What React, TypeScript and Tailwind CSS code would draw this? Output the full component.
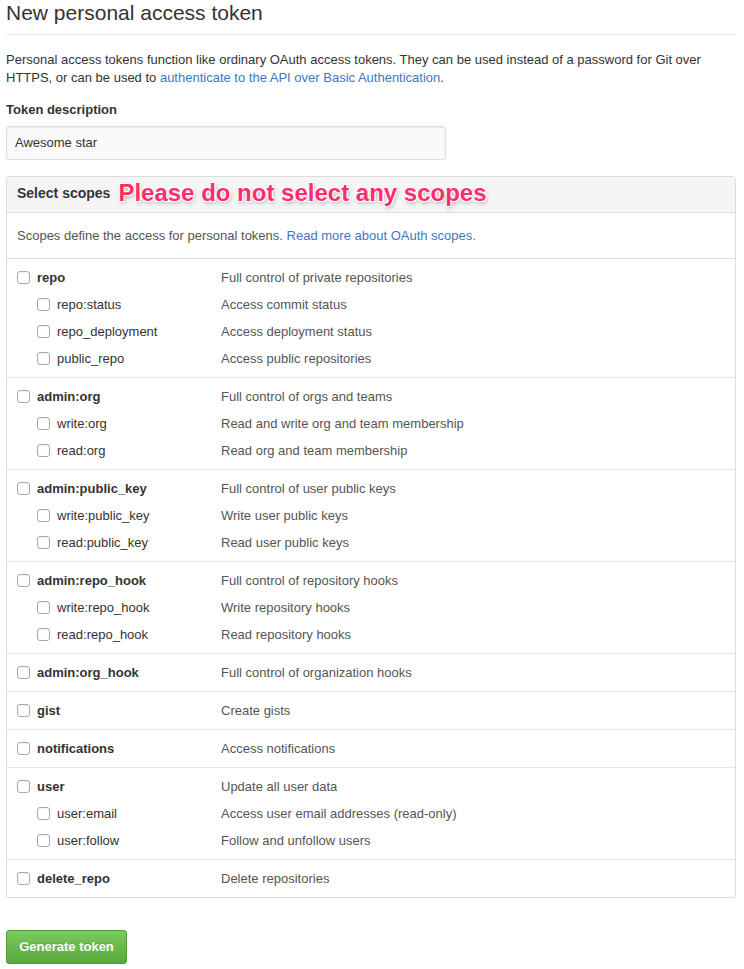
const groups: { name: string; desc: string; subs: [string, string][] }[] = [
  {
    name: 'repo',
    desc: 'Full control of private repositories',
    subs: [
      ['repo:status', 'Access commit status'],
      ['repo_deployment', 'Access deployment status'],
      ['public_repo', 'Access public repositories'],
    ],
  },
  {
    name: 'admin:org',
    desc: 'Full control of orgs and teams',
    subs: [
      ['write:org', 'Read and write org and team membership'],
      ['read:org', 'Read org and team membership'],
    ],
  },
  {
    name: 'admin:public_key',
    desc: 'Full control of user public keys',
    subs: [
      ['write:public_key', 'Write user public keys'],
      ['read:public_key', 'Read user public keys'],
    ],
  },
  {
    name: 'admin:repo_hook',
    desc: 'Full control of repository hooks',
    subs: [
      ['write:repo_hook', 'Write repository hooks'],
      ['read:repo_hook', 'Read repository hooks'],
    ],
  },
  { name: 'admin:org_hook', desc: 'Full control of organization hooks', subs: [] },
  { name: 'gist', desc: 'Create gists', subs: [] },
  { name: 'notifications', desc: 'Access notifications', subs: [] },
  {
    name: 'user',
    desc: 'Update all user data',
    subs: [
      ['user:email', 'Access user email addresses (read-only)'],
      ['user:follow', 'Follow and unfollow users'],
    ],
  },
  { name: 'delete_repo', desc: 'Delete repositories', subs: [] },
];

const Checkbox = () => (
  <span className="inline-block w-[13px] h-[13px] shrink-0 rounded-[3px] border border-[#a9a9a9] bg-white shadow-[inset_0_1px_1px_rgba(0,0,0,0.06)]" />
);

const ScopeRow = ({ name, desc, sub }: { name: string; desc: string; sub?: boolean }) => (
  <div className="flex items-center h-[27px] pl-[10px]">
    <div className={`flex items-center w-[204px] ${sub ? 'pl-[20px]' : ''}`}>
      <Checkbox />
      <span className={`ml-[7px] ${sub ? 'text-[#333]' : 'font-bold text-[#333]'}`}>{name}</span>
    </div>
    <span className="text-[#555]">{desc}</span>
  </div>
);

export default function App() {
  return (
    <div className="w-[744px] min-h-[969px] bg-white px-[6px] text-[13px] leading-[18px] text-[#333] font-['Liberation_Sans',Arial,sans-serif]">
      <h2 className="text-[21px] leading-[26px] font-normal text-[#333] pb-[8px] border-b border-[#e5e5e5] w-[730px]">
        New personal access token
      </h2>

      <p className="mt-[16px] w-[730px]">
        Personal access tokens function like ordinary OAuth access tokens. They can be used instead of a password for Git over
        HTTPS, or can be used to <a className="text-[#4078c0]">authenticate to the API over Basic Authentication</a>.
      </p>

      <label className="block mt-[14px] font-bold">Token description</label>
      <div className="mt-[7px] w-[440px] h-[34px] flex items-center px-[8px] bg-[#fafafa] border border-[#ddd] rounded-[3px] shadow-[inset_0_1px_2px_rgba(0,0,0,0.075)]">
        Awesome star
      </div>

      <div className="mt-[16px] w-[730px] border border-[#ddd] rounded-[3px]">
        <div className="h-[36px] flex items-center px-[10px] pb-[3px] bg-[#f5f5f5] border-b border-[#ddd]">
          <h3 className="text-[14px] font-bold text-[#333]">Select scopes</h3>
          <span className="ml-[8px] text-[24px] font-bold text-[#ff2d6d] leading-[28px] [text-shadow:-1px_-1px_0_#fff,1px_-1px_0_#fff,-1px_1px_0_#fff,1px_1px_0_#fff,1px_2px_4px_rgba(0,0,0,0.35)]">
            Please do not select any scopes
          </span>
        </div>
        <div className="h-[46px] flex items-center px-[10px] border-b border-[#ddd] text-[#555]">
          <span>
            Scopes define the access for personal tokens.{' '}
            <a className="text-[#4078c0]">Read more about OAuth scopes.</a>
          </span>
        </div>
        {groups.map((g, i) => (
          <div key={g.name} className={`py-[5px] ${i < groups.length - 1 ? 'border-b border-[#e5e5e5]' : ''}`}>
            <ScopeRow name={g.name} desc={g.desc} />
            {g.subs.map(([n, d]) => (
              <ScopeRow key={n} name={n} desc={d} sub />
            ))}
          </div>
        ))}
      </div>

      <button className="mt-[32px] w-[121px] h-[34px] rounded-[3px] border border-[#4e9b34] bg-gradient-to-b from-[#79cb5a] to-[#58a73c] text-white font-bold text-[13px] [text-shadow:0_-1px_0_rgba(0,0,0,0.15)]">
        Generate token
      </button>
    </div>
  );
}
